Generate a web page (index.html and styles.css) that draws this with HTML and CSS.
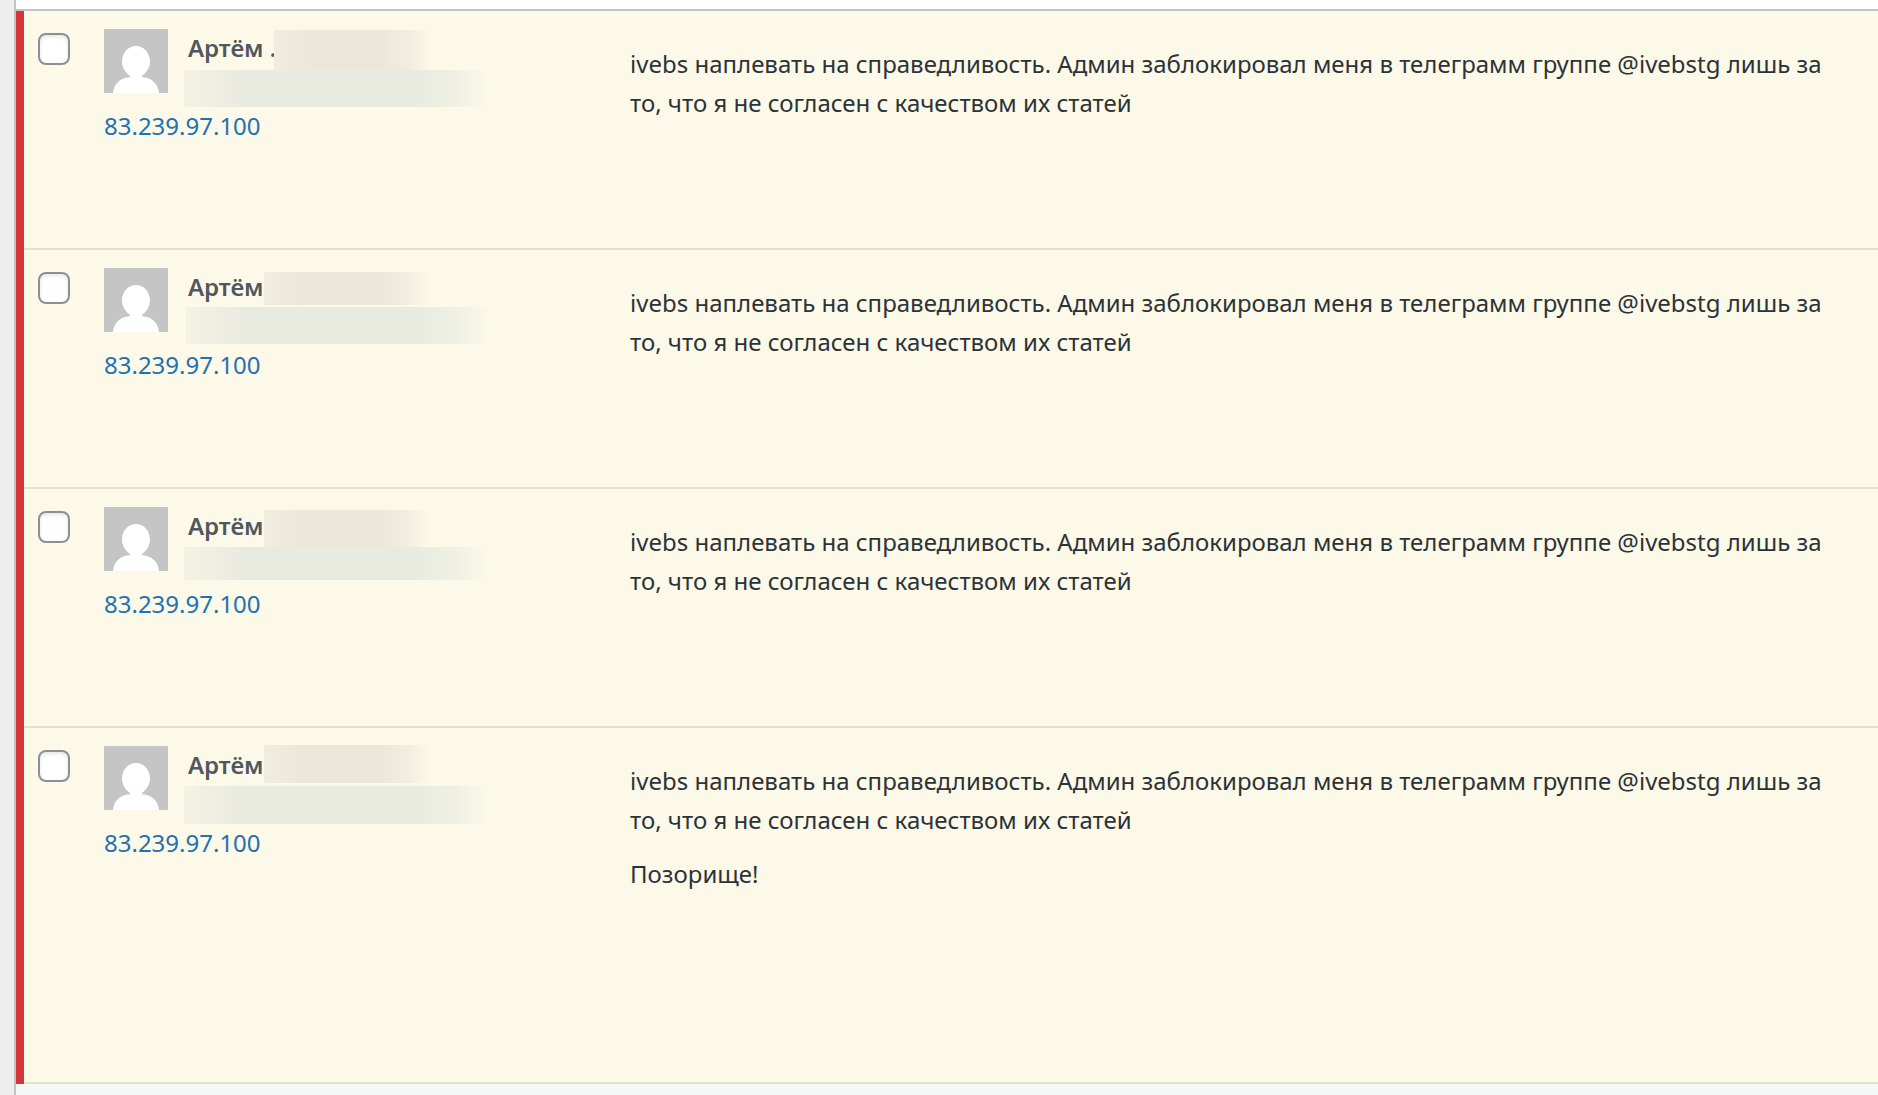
FILE: index.html
```
<!DOCTYPE html>
<html lang="ru">

<head>
    <meta charset="utf-8" />
    <title>Комментарии</title>
    <meta name="viewport" content="width=device-width, initial-scale=1" />
    <link rel="stylesheet" href="styles.css">
</head>

<body>
    <!-- avatar shape, used in every row -->
    <svg class="sprite" aria-hidden="true">
        <symbol id="person" viewBox="0 0 64 64">
            <rect width="64" height="64" fill="#c5c5c5" />
            <path d="M32 17c7.700 0 14 6.800 14 15.500 0 5.800-3.300 10.900-7.800 14.200v1.500c10.500.5 16 7.300 16.800 15.800H9c.8-8.500 6.300-15.300 16.800-15.800v-1.500c-4.500-3.300-7.800-8.400-7.800-14.200 0-8.700 6.300-15.500 14-15.500z" fill="#fff" />
        </symbol>
    </svg>

    <div class="list">
        <div class="listHead"></div>

        <table class="comments">
            <tbody>
                <tr>
                    <td class="check"><input type="checkbox" aria-label="Артём" /></td>
                    <td class="author">
                        <div class="who">
                            <svg class="avatar"><use href="#person" /></svg>
                            <strong>Артём .</strong>
                            <span class="hide name n1"></span>
                            <span class="hide mail m1"></span>
                        </div>
                        <a href="#">83.239.97.100</a>
                    </td>
                    <td class="comment">
                        <p>ivebs наплевать на справедливость. Админ заблокировал меня в телеграмм группе @ivebstg лишь за то, что я не согласен с качеством их статей</p>
                    </td>
                </tr>
                <tr>
                    <td class="check"><input type="checkbox" aria-label="Артём" /></td>
                    <td class="author">
                        <div class="who">
                            <svg class="avatar"><use href="#person" /></svg>
                            <strong>Артём</strong>
                            <span class="hide name n2"></span>
                            <span class="hide mail m2"></span>
                        </div>
                        <a href="#">83.239.97.100</a>
                    </td>
                    <td class="comment">
                        <p>ivebs наплевать на справедливость. Админ заблокировал меня в телеграмм группе @ivebstg лишь за то, что я не согласен с качеством их статей</p>
                    </td>
                </tr>
                <tr>
                    <td class="check"><input type="checkbox" aria-label="Артём" /></td>
                    <td class="author">
                        <div class="who">
                            <svg class="avatar"><use href="#person" /></svg>
                            <strong>Артём</strong>
                            <span class="hide name n3"></span>
                            <span class="hide mail m3"></span>
                        </div>
                        <a href="#">83.239.97.100</a>
                    </td>
                    <td class="comment">
                        <p>ivebs наплевать на справедливость. Админ заблокировал меня в телеграмм группе @ivebstg лишь за то, что я не согласен с качеством их статей</p>
                    </td>
                </tr>
                <tr class="long">
                    <td class="check"><input type="checkbox" aria-label="Артём" /></td>
                    <td class="author">
                        <div class="who">
                            <svg class="avatar"><use href="#person" /></svg>
                            <strong>Артём</strong>
                            <span class="hide name n4"></span>
                            <span class="hide mail m4"></span>
                        </div>
                        <a href="#">83.239.97.100</a>
                    </td>
                    <td class="comment">
                        <p>ivebs наплевать на справедливость. Админ заблокировал меня в телеграмм группе @ivebstg лишь за то, что я не согласен с качеством их статей</p>
                        <p>Позорище!</p>
                    </td>
                </tr>
            </tbody>
        </table>
    </div>
</body>

</html>
```

FILE: styles.css
```
* {
    box-sizing: border-box
}

body,
p {
    margin: 0;
    padding: 0
}

body {
    padding-left: 14px;
    background: #eee;
    color: #2c3338;
    font-family: "Noto Sans", "Open Sans", sans-serif;
    font-size: 24px;
    line-height: 39px
}

.sprite {
    display: none
}

.list {
    min-height: 100vh;
    border-left: 2px solid #c3c4c7;
    background: #f6f7f7
}

.listHead {
    height: 11px;
    background: #fff;
    border-bottom: 2px solid #c3c4c7
}

.comments {
    width: 100%;
    border-spacing: 0;
    table-layout: fixed;
    background: #fcf9e8
}

.comments tr {
    height: 239px
}

.comments .long {
    height: 356px
}

.comments td {
    padding: 17px 0 0;
    vertical-align: top;
    box-shadow: inset 0 -2px 0 #e3e0d1
}

/* unapproved mark */
.comments .check {
    width: 88px;
    padding: 22px 0 0 14px;
    border-left: 8px solid #d63638
}

.check input {
    display: block;
    appearance: none;
    width: 32px;
    height: 32px;
    margin: 0;
    border: 2px solid #8c8f94;
    border-radius: 8px;
    background: #fff;
    box-shadow: inset 0 2px 4px rgba(0, 0, 0, 0.1)
}

.author {
    width: 526px
}

.who {
    position: relative;
    display: flex;
    gap: 20px;
    height: 78px
}

.avatar {
    width: 64px;
    height: 64px;
    margin-top: 1px
}

.who strong {
    color: #50575e;
    font-weight: 600
}

.author a {
    color: #2271b1;
    text-decoration: none
}

.comments .comment {
    padding: 33px 30px 0 0
}

.comment p + p {
    margin-top: 15px
}

/* smudges over the surname and the e-mail */
.hide {
    position: absolute;
    left: 160px;
    width: 164px;
    height: 36px
}

.name {
    background: linear-gradient(90deg, #f0edde, #ebe8da 25%, #ebe8da 70%, #f1eedf 88%, #fcf9e8)
}

.mail {
    left: 80px;
    width: 304px;
    background: linear-gradient(90deg, #f3f2e3, #e9eae0 20%, #e9eae0 75%, #f0f1e4 90%, #fcf9e8)
}

.n1 {
    left: 170px;
    width: 156px;
    top: 2px;
    height: 41px
}

.m1 {
    top: 42px;
    height: 37px
}

.n2 {
    top: 5px;
    height: 33px
}

.m2 {
    left: 82px;
    top: 40px;
    height: 37px
}

.n3 {
    top: 4px;
    height: 37px
}

.m3 {
    top: 41px;
    height: 33px
}

.n4 {
    top: 0;
    height: 38px
}

.m4 {
    top: 41px;
    height: 38px
}
```
